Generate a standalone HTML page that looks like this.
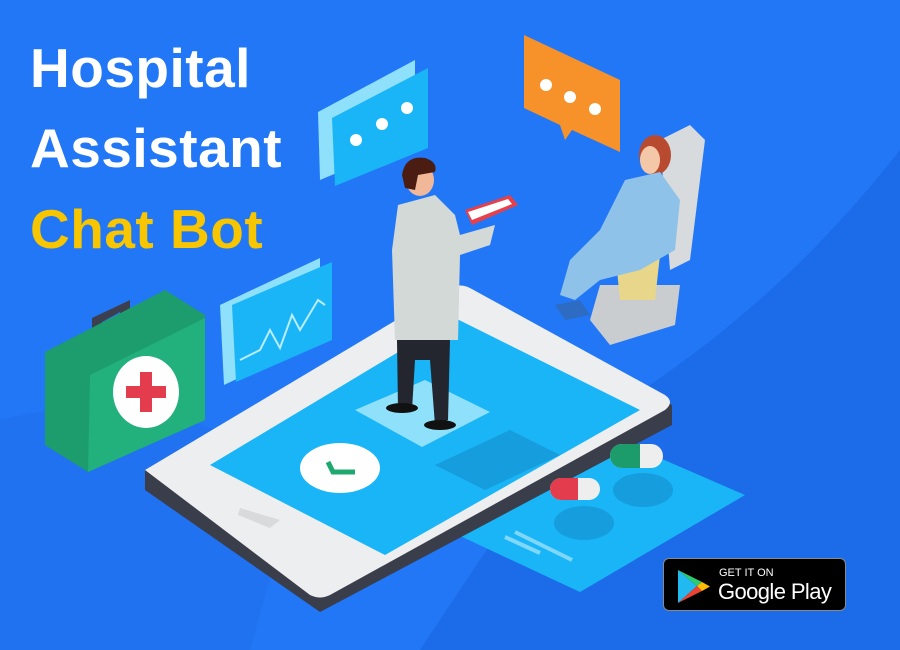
<!DOCTYPE html>
<html><head><meta charset="utf-8"><style>
html,body{margin:0;padding:0;width:900px;height:650px;overflow:hidden;background:#2277f6}
.t{position:absolute;left:30px;font-family:"Liberation Sans",sans-serif;font-weight:bold;font-size:55px;color:#fff;line-height:1;letter-spacing:0.5px}
</style></head><body>
<svg width="900" height="650" style="position:absolute;left:0;top:0">
<rect width="900" height="650" fill="#2277f6"/>
<path d="M900 150 Q760 330 560 440 L420 650 L900 650Z" fill="#1c6be8"/>
<path d="M0 420 Q150 380 300 470 L250 650 L0 650Z" fill="#1f6fee" opacity=".6"/>
<!-- card -->
<path d="M600 432 L745 495 L580 592 L458 535 Z" fill="#1ab5f7"/>
<ellipse cx="643" cy="490" rx="30" ry="17" fill="#169ddd"/>
<ellipse cx="584" cy="523" rx="30" ry="17" fill="#169ddd"/>
<path d="M505 537 L540 553 M515 532 L572 560" stroke="#7fd8fb" stroke-width="4"/>
<!-- phone -->
<path d="M145 470 L450 290 L672 405 L672 425 L320 612 L145 490 Z" fill="#3a3d4a"/>
<path d="M145 470 L450 288 Q460 283 470 288 L665 395 Q675 402 665 410 L330 595 Q320 600 310 595 Z" fill="#eceeef"/>
<path d="M210 465 L455 318 L640 410 L385 555 Z" fill="#1ab5f7"/>
<path d="M240 508 L280 520 L270 528 L238 515Z" fill="#d8dadc"/>
<path d="M435 465 L510 430 L560 455 L485 490Z" fill="#169ddd"/>
<ellipse cx="340" cy="468" rx="40" ry="25" fill="#fff"/>
<path d="M328 462 L333 472 L355 472" stroke="#1fa86f" stroke-width="5" fill="none"/>
<!-- pills -->
<rect x="550" y="478" width="50" height="22" rx="11" fill="#eee"/>
<path d="M561 478 L578 478 L578 500 L561 500 A11 11 0 0 1 561 478Z" fill="#e33d4d"/>
<rect x="610" y="444" width="53" height="24" rx="12" fill="#eee"/>
<path d="M622 444 L640 444 L640 468 L622 468 A12 12 0 0 1 622 444Z" fill="#1b9c6a"/>
<!-- platform -->
<path d="M355 410 L425 380 L490 412 L422 447Z" fill="#8ee0fb"/>
<!-- medkit -->
<path d="M92 318 L130 300 L130 330 L120 335 L120 312 L102 322 L102 345 L92 350Z" fill="#3b3f4e"/>
<path d="M45 352 L165 290 L205 315 L205 420 L88 472 L45 445Z" fill="#1d9c6e"/>
<path d="M90 375 L205 318 L205 420 L88 472Z" fill="#22b07c"/>
<ellipse cx="146" cy="392" rx="33" ry="36" fill="#fff"/>
<path d="M140 372 h12 v14 h14 v12 h-14 v14 h-12 v-14 h-14 v-12 h14z" fill="#e33d4d"/>
<!-- chart -->
<path d="M220 305 L320 258 L320 340 L224 385Z" fill="#8ee0fb"/>
<path d="M232 305 L332 262 L332 340 L236 382Z" fill="#1ab5f7"/>
<path d="M240 360 L260 350 L270 330 L280 348 L292 315 L300 330 L318 300 L325 305" stroke="#b9ecff" stroke-width="2" fill="none"/>
<!-- blue chat -->
<path d="M318 112 L415 60 L415 140 L320 180Z" fill="#8ee0fb"/>
<path d="M332 118 L428 68 L428 148 L335 186Z" fill="#1ab5f7"/>
<circle cx="356" cy="140" r="6" fill="#fff"/><circle cx="382" cy="124" r="6" fill="#fff"/><circle cx="407" cy="108" r="6" fill="#fff"/>
<!-- orange chat -->
<path d="M524 35 L620 80 L620 152 L572 130 L565 140 L560 125 L524 108Z" fill="#f7922a"/>
<circle cx="546" cy="85" r="6" fill="#fff"/><circle cx="570" cy="97" r="6" fill="#fff"/><circle cx="595" cy="109" r="6" fill="#fff"/>
<!-- chair & patient -->
<path d="M660 140 L690 125 L705 140 L690 260 L670 270Z" fill="#d7dbdd"/>
<path d="M600 285 L680 285 L675 325 L610 345 L590 320Z" fill="#c9cdd0"/>
<path d="M615 250 L660 255 L655 300 L620 300Z" fill="#e8d78a"/>
<ellipse cx="655" cy="155" rx="16" ry="20" fill="#b84a30"/>
<ellipse cx="650" cy="160" rx="10" ry="14" fill="#f4c7a8"/>
<path d="M625 180 L660 172 L680 200 L675 250 L640 270 L600 280 L575 300 L560 295 L570 260 L600 230 L615 200Z" fill="#8fc2e8"/>
<path d="M555 305 L580 300 L590 315 L565 320Z" fill="#2d6cc2"/>
<!-- doctor -->
<path d="M397 340 L450 340 L448 420 L435 425 L430 360 L415 360 L412 410 L398 410Z" fill="#23262e"/>
<ellipse cx="402" cy="408" rx="16" ry="5" fill="#111"/><ellipse cx="440" cy="425" rx="16" ry="5" fill="#111"/>
<path d="M398 205 L435 195 L455 215 L460 235 L495 225 L490 245 L460 255 L458 340 L395 340 L392 250Z" fill="#d3d9d6"/>
<path d="M465 210 L510 195 L518 205 L472 225Z" fill="#e8404a"/>
<path d="M468 212 L508 199 L512 204 L472 220Z" fill="#fff"/>
<ellipse cx="420" cy="180" rx="14" ry="16" fill="#f0b898"/>
<path d="M402 175 Q405 155 425 158 Q438 162 435 172 L418 175 L415 190 L405 188Z" fill="#4a1c12"/>
</svg>
<div class="t" style="top:41px">Hospital</div>
<div class="t" style="top:121px">Assistant</div>
<div class="t" style="top:202px;color:#f7c600">Chat Bot</div>
<div style="position:absolute;left:663px;top:558px;width:181px;height:51px;background:#000;border:1px solid #8a8a8a;border-radius:6px">
<svg width="40" height="40" style="position:absolute;left:11px;top:7px" viewBox="0 0 40 40">
<path d="M3 4 L22 20 L3 37Z" fill="#22b8f0"/>
<path d="M3 4 L27 16 L22 20Z" fill="#2ecc71"/>
<path d="M3 37 L27 25 L22 20Z" fill="#ea4335"/>
<path d="M27 16 L35 20.5 L27 25 L22 20Z" fill="#fbbc05"/>
</svg>
<div style="position:absolute;left:55px;top:8px;font:11px 'Liberation Sans',sans-serif;color:#fff">GET IT ON</div>
<div style="position:absolute;left:54px;top:20px;font:22px 'Liberation Sans',sans-serif;color:#fff;letter-spacing:-0.6px">Google Play</div>
</div>
</body></html>
